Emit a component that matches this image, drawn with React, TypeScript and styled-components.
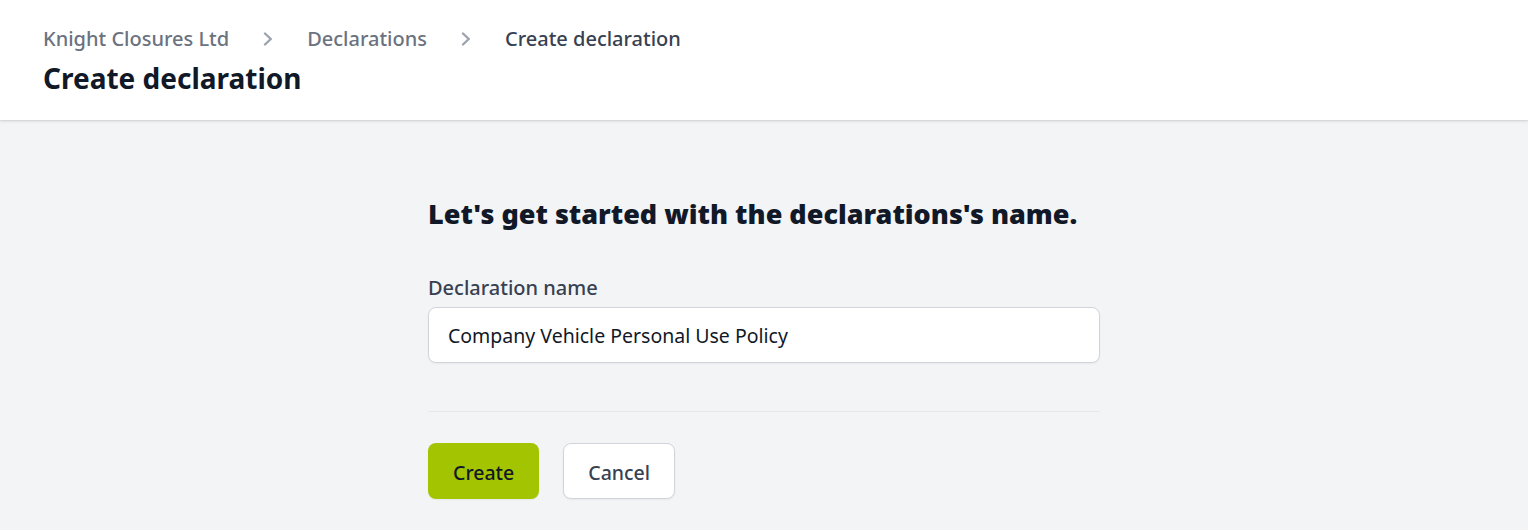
import styled, { createGlobalStyle } from 'styled-components'

const GlobalStyle = createGlobalStyle`
  html, body {
    margin: 0;
    padding: 0;
    background: #f3f4f6;
    font-family: 'Noto Sans', 'Open Sans', sans-serif;
  }
  * { box-sizing: border-box; }
`

const crumbs = ['Knight Closures Ltd', 'Declarations']

const Chevron = () => (
  <svg width="10" height="14" viewBox="0 0 10 14" fill="none">
    <path d="M2 1.5L7.8 7 2 12.5" stroke="#9ca3af" strokeWidth="2.4" strokeLinecap="round" strokeLinejoin="round" />
  </svg>
)

const App = () => {
  return (
    <>
      <GlobalStyle />
      <Page>
        <Header>
          <Breadcrumbs>
            {crumbs.map((c) => (
              <Crumb key={c}>
                <CrumbLink>{c}</CrumbLink>
                <Chevron />
              </Crumb>
            ))}
            <Crumb>
              <CrumbLink current>Create declaration</CrumbLink>
            </Crumb>
          </Breadcrumbs>
          <PageTitle>Create declaration</PageTitle>
        </Header>

        <Main>
          <Form>
            <Heading>Let's get started with the declarations's name.</Heading>
            <Field>
              <Label htmlFor="name">Declaration name</Label>
              <Input id="name" defaultValue="Company Vehicle Personal Use Policy" />
            </Field>
            <Divider />
            <Actions>
              <Button variant="primary">Create</Button>
              <Button variant="secondary">Cancel</Button>
            </Actions>
          </Form>
        </Main>
      </Page>
    </>
  )
}

export default App

const Page = styled.div`
  min-height: 530px;
  display: flex;
  flex-direction: column;
`

const Header = styled.header`
  background: #ffffff;
  padding: 25px 43px 0;
  height: 120px;
  box-shadow: 0 1px 3px rgba(0, 0, 0, 0.12), 0 1px 2px rgba(0, 0, 0, 0.06);
  position: relative;
  z-index: 1;
`

const Breadcrumbs = styled.ol`
  list-style: none;
  margin: 0;
  padding: 0;
  display: flex;
  align-items: center;
  gap: 34px;
`

const Crumb = styled.li`
  display: flex;
  align-items: center;
  gap: 34px;
`

const CrumbLink = styled.span<{ current?: boolean }>`
  font-size: 20px;
  font-weight: 500;
  line-height: 28px;
  color: ${(p) => (p.current ? '#374151' : '#6b7280')};
`

const PageTitle = styled.h1`
  margin: 7px 0 0;
  font-size: 28px;
  font-weight: 700;
  line-height: 36px;
  color: #111827;
`

const Main = styled.main`
  flex: 1;
  display: flex;
  justify-content: center;
  padding-top: 77px;
`

const Form = styled.div`
  width: 672px;
`

const Heading = styled.h2`
  margin: 0 0 44px;
  font-size: 27px;
  font-weight: 900;
  line-height: 34px;
  color: #111827;
`

const Field = styled.div`
  display: flex;
  flex-direction: column;
  gap: 6px;
`

const Label = styled.label`
  font-size: 20px;
  font-weight: 500;
  line-height: 26px;
  color: #374151;
`

const Input = styled.input`
  height: 56px;
  width: 100%;
  padding: 1px 19px 0;
  border: 1px solid #d1d5db;
  border-radius: 8px;
  background: #ffffff;
  font-family: inherit;
  font-size: 19.5px;
  color: #111827;
  box-shadow: 0 1px 2px rgba(0, 0, 0, 0.05);
  outline: none;
`

const Divider = styled.hr`
  border: 0;
  border-top: 1px solid #e5e7eb;
  margin: 48px 0 31px;
`

const Actions = styled.div`
  display: flex;
  gap: 24px;
`

const Button = styled.button<{ variant: 'primary' | 'secondary' }>`
  height: 56px;
  padding: 3px 24px 0;
  border-radius: 8px;
  font-family: inherit;
  font-size: 19.5px;
  font-weight: 500;
  cursor: pointer;
  background: ${(p) => (p.variant === 'primary' ? '#a3c400' : '#ffffff')};
  color: ${(p) => (p.variant === 'primary' ? '#111827' : '#374151')};
  border: 1px solid ${(p) => (p.variant === 'primary' ? 'transparent' : '#d1d5db')};
  box-shadow: 0 1px 2px rgba(0, 0, 0, 0.05);
`
